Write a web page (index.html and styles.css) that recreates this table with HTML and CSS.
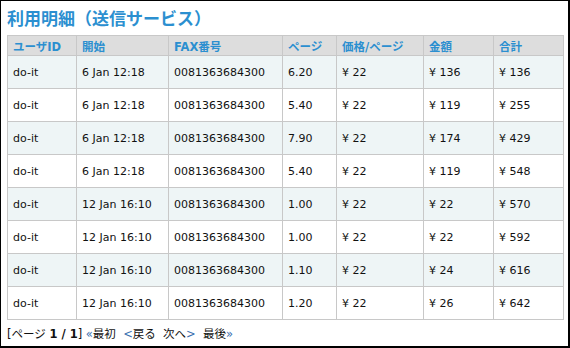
FILE: index.html
```html
<!DOCTYPE html>
<html lang="ja">
<head>
<meta charset="utf-8">
<link rel="stylesheet" href="styles.css">
</head>
<body>
<div class="frame">
  <h1 class="title">利用明細（送信サービス）</h1>
  <table class="usage">
    <colgroup>
      <col class="c1"><col class="c2"><col class="c3"><col class="c4"><col class="c5"><col class="c6"><col class="c7">
    </colgroup>
    <thead>
      <tr><th>ユーザID</th><th>開始</th><th>FAX番号</th><th>ページ</th><th>価格/ページ</th><th>金額</th><th>合計</th></tr>
    </thead>
    <tbody>
      <tr class="odd"><td>do-it</td><td>6 Jan 12:18</td><td>0081363684300</td><td>6.20</td><td>¥ 22</td><td>¥ 136</td><td>¥ 136</td></tr>
      <tr><td>do-it</td><td>6 Jan 12:18</td><td>0081363684300</td><td>5.40</td><td>¥ 22</td><td>¥ 119</td><td>¥ 255</td></tr>
      <tr class="odd"><td>do-it</td><td>6 Jan 12:18</td><td>0081363684300</td><td>7.90</td><td>¥ 22</td><td>¥ 174</td><td>¥ 429</td></tr>
      <tr><td>do-it</td><td>6 Jan 12:18</td><td>0081363684300</td><td>5.40</td><td>¥ 22</td><td>¥ 119</td><td>¥ 548</td></tr>
      <tr class="odd"><td>do-it</td><td>12 Jan 16:10</td><td>0081363684300</td><td>1.00</td><td>¥ 22</td><td>¥ 22</td><td>¥ 570</td></tr>
      <tr><td>do-it</td><td>12 Jan 16:10</td><td>0081363684300</td><td>1.00</td><td>¥ 22</td><td>¥ 22</td><td>¥ 592</td></tr>
      <tr class="odd"><td>do-it</td><td>12 Jan 16:10</td><td>0081363684300</td><td>1.10</td><td>¥ 22</td><td>¥ 24</td><td>¥ 616</td></tr>
      <tr><td>do-it</td><td>12 Jan 16:10</td><td>0081363684300</td><td>1.20</td><td>¥ 22</td><td>¥ 26</td><td>¥ 642</td></tr>
    </tbody>
  </table>
  <div class="pager">[ページ <b>1 / 1</b>] <span class="arr">«</span>最初&nbsp;&nbsp;<span class="arr">&lt;</span>戻る&nbsp;&nbsp;次へ<span class="arr">&gt;</span>&nbsp;&nbsp;最後<span class="arr">»</span></div>
</div>
</body>
</html>
```

FILE: styles.css
```css
html, body {
  margin: 0;
  padding: 0;
  background: #fff;
}
.frame {
  width: 570px;
  height: 348px;
  box-sizing: border-box;
  border-left: 1px solid #000;
  border-top: 1px solid #000;
  border-right: 2px solid #000;
  border-bottom: 2px solid #000;
  padding: 0 0 0 6px;
  font-family: "DejaVu Sans", "Noto Sans CJK JP", sans-serif;
  font-size: 11px;
  color: #111;
}
.title {
  margin: 0;
  padding-top: 6px;
  height: 28px;
  font-family: "Noto Sans CJK JP", sans-serif;
  font-size: 17px;
  line-height: 22px;
  font-weight: bold;
  color: #2b8fd0;
}
.usage {
  border-collapse: collapse;
  table-layout: fixed;
  width: 556px;
  border: 1px solid #c8c8c8;
}
.c1 { width: 69px; }
.c2 { width: 92px; }
.c3 { width: 114px; }
.c4 { width: 54px; }
.c5 { width: 87px; }
.c6 { width: 70px; }
.c7 { width: 70px; }
.usage th {
  background: #dddddd;
  color: #2b8fd0;
  font-weight: bold;
  text-align: left;
  height: 19px;
  padding: 0 0 0 5px;
  border: 1px solid #c8c8c8;
  white-space: nowrap;
  font-family: "DejaVu Sans", "Noto Sans CJK JP", sans-serif;
  font-size: 11.5px;
}
.usage td {
  height: 32px;
  padding: 0 0 0 5px;
  border: 1px solid #c8c8c8;
  white-space: nowrap;
}
.usage tr.odd td {
  background: #eef5f6;
}
.pager {
  margin-top: 6px;
  font-size: 11.5px;
  line-height: 16px;
  color: #111;
}
.pager b {
  font-weight: bold;
}
.arr {
  color: #3a6fb0;
}
```
